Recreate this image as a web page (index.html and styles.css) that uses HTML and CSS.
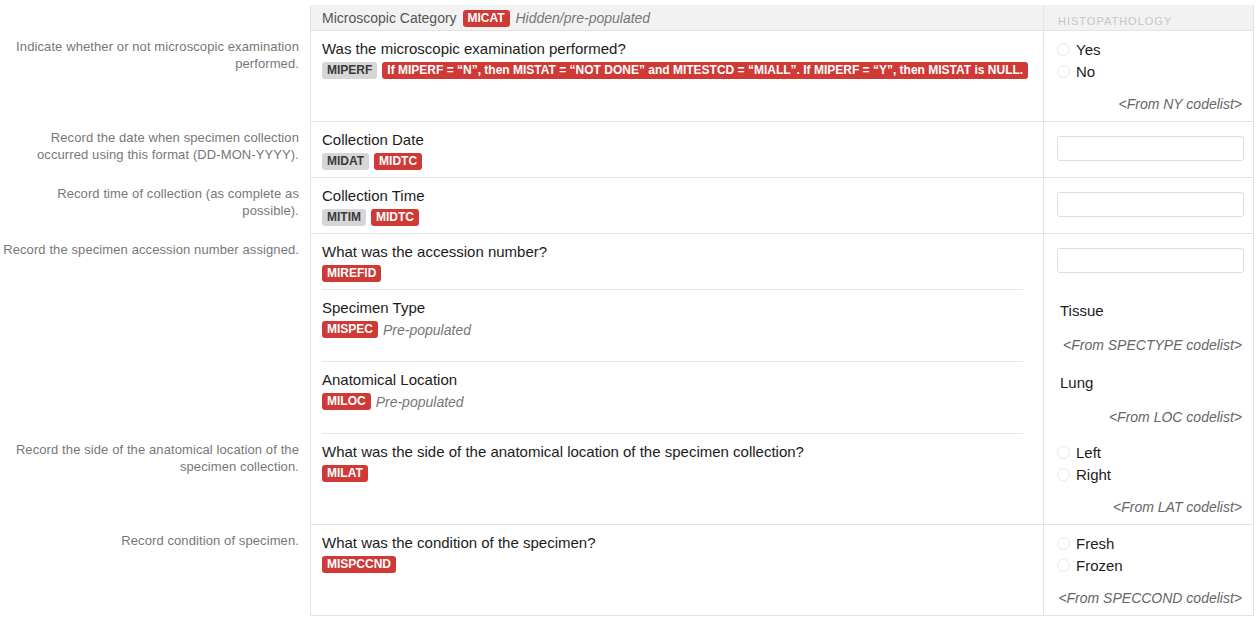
FILE: index.html
```html
<!DOCTYPE html>
<html>
<head>
	<title>Microscopic Findings</title>
	<link rel="stylesheet" href="styles.css">
</head>
<body>
	<div class="form">

		<div class="row head">
			<div class="desc"></div>
			<div class="card">
				<div class="q">
					<div class="q-in">Microscopic Category <span class="tag red">MICAT</span> <em class="note">Hidden/pre-populated</em></div>
				</div>
				<div class="a"><span class="domain">HISTOPATHOLOGY</span></div>
			</div>
		</div>

		<div class="row line">
			<div class="desc">Indicate whether or not microscopic examination performed.</div>
			<div class="card">
				<div class="q">
					<div class="q-in">
						<div class="label">Was the microscopic examination performed?</div>
						<div class="tags"><span class="tag grey">MIPERF</span><span class="tag red">If MIPERF = “N”, then MISTAT = “NOT DONE” and MITESTCD = “MIALL”. If MIPERF = “Y”, then MISTAT is NULL.</span></div>
					</div>
				</div>
				<div class="a radios">
					<label class="opt"><span class="radio"></span>Yes</label>
					<label class="opt"><span class="radio"></span>No</label>
					<div class="codelist">&lt;From NY codelist&gt;</div>
				</div>
			</div>
		</div>

		<div class="row line">
			<div class="desc">Record the date when specimen collection occurred using this format (DD-MON-YYYY).</div>
			<div class="card">
				<div class="q">
					<div class="q-in">
						<div class="label">Collection Date</div>
						<div class="tags"><span class="tag grey">MIDAT</span><span class="tag red">MIDTC</span></div>
					</div>
				</div>
				<div class="a"><input class="field" type="text"></div>
			</div>
		</div>

		<div class="row line">
			<div class="desc">Record time of collection (as complete as possible).</div>
			<div class="card">
				<div class="q">
					<div class="q-in">
						<div class="label">Collection Time</div>
						<div class="tags"><span class="tag grey">MITIM</span><span class="tag red">MIDTC</span></div>
					</div>
				</div>
				<div class="a"><input class="field" type="text"></div>
			</div>
		</div>

		<div class="row inset">
			<div class="desc">Record the specimen accession number assigned.</div>
			<div class="card">
				<div class="q">
					<div class="q-in">
						<div class="label">What was the accession number?</div>
						<div class="tags"><span class="tag red">MIREFID</span></div>
					</div>
				</div>
				<div class="a"><input class="field" type="text"></div>
			</div>
		</div>

		<div class="row inset">
			<div class="desc"></div>
			<div class="card">
				<div class="q">
					<div class="q-in">
						<div class="label">Specimen Type</div>
						<div class="tags"><span class="tag red">MISPEC</span><em class="note">Pre-populated</em></div>
					</div>
				</div>
				<div class="a values">
					<div class="value">Tissue</div>
					<div class="codelist">&lt;From SPECTYPE codelist&gt;</div>
				</div>
			</div>
		</div>

		<div class="row inset">
			<div class="desc"></div>
			<div class="card">
				<div class="q">
					<div class="q-in">
						<div class="label">Anatomical Location</div>
						<div class="tags"><span class="tag red">MILOC</span><em class="note">Pre-populated</em></div>
					</div>
				</div>
				<div class="a values">
					<div class="value">Lung</div>
					<div class="codelist">&lt;From LOC codelist&gt;</div>
				</div>
			</div>
		</div>

		<div class="row line">
			<div class="desc">Record the side of the anatomical location of the specimen collection.</div>
			<div class="card">
				<div class="q">
					<div class="q-in">
						<div class="label">What was the side of the anatomical location of the specimen collection?</div>
						<div class="tags"><span class="tag red">MILAT</span></div>
					</div>
				</div>
				<div class="a radios">
					<label class="opt"><span class="radio"></span>Left</label>
					<label class="opt"><span class="radio"></span>Right</label>
					<div class="codelist">&lt;From LAT codelist&gt;</div>
				</div>
			</div>
		</div>

		<div class="row line">
			<div class="desc">Record condition of specimen.</div>
			<div class="card">
				<div class="q">
					<div class="q-in">
						<div class="label">What was the condition of the specimen?</div>
						<div class="tags"><span class="tag red">MISPCCND</span></div>
					</div>
				</div>
				<div class="a radios">
					<label class="opt"><span class="radio"></span>Fresh</label>
					<label class="opt"><span class="radio"></span>Frozen</label>
					<div class="codelist">&lt;From SPECCOND codelist&gt;</div>
				</div>
			</div>
		</div>

	</div>
</body>
</html>
```

FILE: styles.css
```css
body {
	margin: 0;
	background: #fff;
	font-family: "Liberation Sans", Arial, sans-serif;
	color: #1c1c1c;
}

.form {
	margin-top: 5px;
}

.row {
	display: grid;
	grid-template-columns: 310px 944px;
}

.desc {
	padding: 7px 11px 0 0;
	text-align: right;
	font-size: 13px;
	line-height: 17px;
	color: #777;
	letter-spacing: 0.1px;
}

.card {
	display: grid;
	grid-template-columns: 732px 1fr;
	border-left: solid 1px #e2e2e2;
	border-right: solid 1px #e2e2e2;
}

.row.line .card {
	border-bottom: solid 1px #e4e4e4;
}

.q {
	display: flex;
	flex-direction: column;
	padding: 0 20px 0 11px;
}

.q-in {
	flex: 1;
	padding: 9px 0 7px;
}

.row.inset .q-in {
	border-bottom: solid 1px #e8e8e8;
}

.a {
	border-left: solid 1px #e4e4e4;
	padding: 0 11px 0 13px;
}

/* header */

.row.head .card {
	background: #f2f2f2;
	border-bottom: solid 1px #e4e4e4;
}

.row.head .q-in {
	padding: 4px 0 3px;
	font-size: 14px;
	line-height: 18px;
	color: #555;
}

.row.head .a {
	padding-left: 14px;
	padding-top: 6px;
}

.domain {
	font-size: 11px;
	letter-spacing: 1px;
	color: #c6c6c6;
}

/* question */

.label {
	font-size: 15px;
	line-height: 18px;
	margin-bottom: 4px;
}

.tags {
	display: flex;
	align-items: center;
	height: 17px;
}

.tag {
	display: inline-block;
	height: 17px;
	line-height: 17px;
	padding: 0 5px;
	border-radius: 3px;
	font-size: 12px;
	font-weight: bold;
	margin-right: 5px;
	white-space: nowrap;
}

.tag.red {
	background: #cf3a36;
	color: #fff;
}

.tag.grey {
	background: #d6d6d6;
	color: #3a3a3a;
}

.row.head .tag {
	vertical-align: 1px;
	margin: 0 2px;
}

.note {
	font-size: 14px;
	color: #777;
}

/* answers */

.radios {
	padding-top: 7px;
	padding-bottom: 8px;
}

.opt {
	display: flex;
	align-items: center;
	height: 22px;
	font-size: 15px;
}

.radio {
	width: 11px;
	height: 11px;
	border: solid 1px #e6e6e6;
	border-radius: 50%;
	margin-right: 6px;
	background: #fff;
}

.codelist {
	margin-top: 13px;
	text-align: right;
	font-size: 14px;
	line-height: 18px;
	font-style: italic;
	color: #666;
}

.values {
	padding-top: 12px;
	padding-bottom: 8px;
}

.values .value {
	font-size: 15px;
	line-height: 18px;
	padding-left: 3px;
}

.values .codelist {
	margin-top: 16px;
}

.field {
	display: block;
	box-sizing: border-box;
	width: 187px;
	height: 25px;
	margin-top: 14px;
	border: solid 1px #dedede;
	border-radius: 3px;
	background: #fff;
}
```
